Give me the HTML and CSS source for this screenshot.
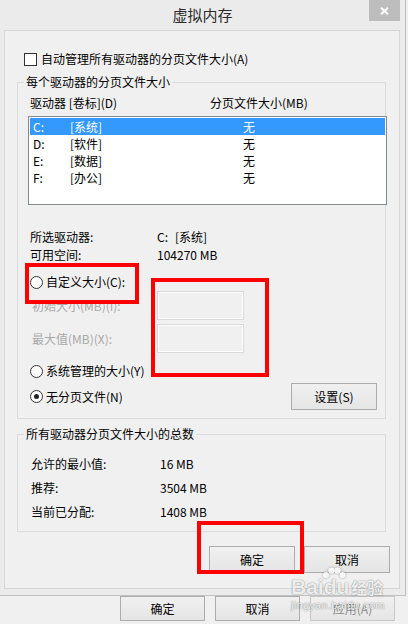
FILE: index.html
```html
<!DOCTYPE html>
<html lang="zh-CN">
<head>
<meta charset="utf-8">
<title>虚拟内存</title>
<link rel="stylesheet" href="styles.css">
</head>
<body>
<div class="dialog">
  <div class="titlebar">
    <span class="title">虚拟内存</span>
    <span class="close"><svg width="9" height="8" viewBox="0 0 9 8"><path d="M1 0.8 L8 7.2 M8 0.8 L1 7.2" stroke="#fff" stroke-width="2" fill="none"/></svg></span>
  </div>
  <div class="client">
    <div class="check-row"><span class="checkbox"></span><span>自动管理所有驱动器的分页文件大小(A)</span></div>

    <fieldset class="group group-drives">
      <legend>每个驱动器的分页文件大小</legend>
      <div class="list-head"><span>驱动器 [卷标](D)</span><span>分页文件大小(MB)</span></div>
      <div class="listbox">
        <div class="list-row selected"><span>C:</span><span>[系统]</span><span>无</span></div>
        <div class="list-row"><span>D:</span><span>[软件]</span><span>无</span></div>
        <div class="list-row"><span>E:</span><span>[数据]</span><span>无</span></div>
        <div class="list-row"><span>F:</span><span>[办公]</span><span>无</span></div>
      </div>
      <div class="info">
        <span>所选驱动器:</span><span><span class="drive">C:</span>[系统]</span>
        <span>可用空间:</span><span>104270 MB</span>
      </div>
      <div class="radio-row"><span class="radio"></span><span>自定义大小(C):</span></div>
      <div class="size-grid">
        <span class="disabled">初始大小(MB)(I):</span><span class="textbox"></span>
        <span class="disabled">最大值(MB)(X):</span><span class="textbox"></span>
      </div>
      <div class="radio-row sys"><span class="radio"></span><span>系统管理的大小(Y)</span></div>
      <div class="radio-row last"><span class="radio checked"></span><span>无分页文件(N)</span><button class="btn btn-set">设置(S)</button></div>
    </fieldset>

    <fieldset class="group group-total">
      <legend>所有驱动器分页文件大小的总数</legend>
      <div class="totals">
        <span>允许的最小值:</span><span>16 MB</span>
        <span>推荐:</span><span>3504 MB</span>
        <span>当前已分配:</span><span>1408 MB</span>
      </div>
    </fieldset>

    <div class="actions"><button class="btn">确定</button><button class="btn">取消</button></div>

    <div class="mark mark-custom"></div>
    <div class="mark mark-boxes"></div>
    <div class="mark mark-ok"></div>
  </div>
</div>
<div class="parent-actions">
  <button class="btn pbtn">确定</button>
  <button class="btn pbtn">取消</button>
  <button class="btn pbtn disabled-btn">应用(A)</button>
</div>
<div class="watermark">
  <div class="wm-logo"><span class="wm-bai">Bai</span><span class="wm-du"><svg class="paw" width="24" height="13" viewBox="0 0 24 13"><circle cx="4" cy="8" r="3"/><circle cx="9.5" cy="3.6" r="3.2"/><circle cx="15.5" cy="3.6" r="3.2"/><circle cx="20.5" cy="8" r="3"/></svg>du</span><span class="wm-cn">经验</span></div>
  <div class="wm-url">jingyan.baidu.com</div>
</div>
</body>
</html>
```
FILE: styles.css
```css
* { box-sizing: border-box; }
body {
  margin: 0;
  width: 408px;
  height: 624px;
  overflow: hidden;
  position: relative;
  background: #f0f0f0;
  font-family: "Noto Sans CJK SC", sans-serif;
  font-size: 12px;
  color: #000;
}
.dialog {
  width: 406px;
  height: 596px;
  background: #ebebeb;
  border-right: 1px solid #bdbdbd;
  border-bottom: 1px solid #c2c2c2;
  padding-bottom: 6px;
}
.titlebar {
  height: 30px;
  display: grid;
}
.title, .close { grid-area: 1 / 1; }
.title {
  justify-self: center;
  line-height: 30px;
  font-size: 15px;
  color: #2b2b2b;
}
.close {
  justify-self: end;
  align-self: start;
  width: 31px;
  height: 21px;
  margin-right: 5px;
  background: #bdbdbd;
  display: flex;
  align-items: center;
  justify-content: center;
}
.client {
  position: relative;
  margin-left: 4px;
  width: 396px;
  height: 559px;
  background: #f0f0f0;
  border: 1px solid #d6d6d6;
  padding-top: 20px;
}
.check-row {
  display: flex;
  align-items: center;
  height: 16px;
  line-height: 16px;
  padding-left: 19px;
  gap: 4px;
}
.checkbox {
  width: 13px;
  height: 13px;
  border: 1px solid #333;
  background: #fff;
}
.group {
  margin: 0 13px 0 12px;
  padding: 0;
  width: 369px;
  min-width: 0;
  border: 1px solid #dcdcdc;
}
.group legend {
  margin-left: 6px;
  padding: 0 2px;
  line-height: 16px;
  font-size: 12px;
}
.group-drives { margin-top: 7px; padding-bottom: 8px; }
.group-total { margin-top: 7px; padding-bottom: 7px; }
.list-head {
  margin-top: 5px;
  padding-left: 12px;
  display: grid;
  grid-template-columns: 180px auto;
  line-height: 16px;
}
.listbox {
  margin-top: 5px;
  margin-left: 10px;
  width: 359px;
  height: 89px;
  border: 1px solid #828790;
  background: #fff;
  padding: 1px;
}
.list-row {
  display: grid;
  grid-template-columns: 37px 173px auto;
  height: 17px;
  line-height: 17px;
  padding-left: 3px;
}
.list-row.selected { background: #3399ff; color: #fff; }
.info {
  margin-top: 23px;
  padding-left: 12px;
  display: grid;
  grid-template-columns: 127px auto;
  line-height: 18px;
}
.drive { margin-right: 7px; }
.radio-row {
  display: flex;
  align-items: center;
  height: 18px;
  line-height: 18px;
  padding-left: 12px;
  gap: 3px;
  margin-top: 9px;
}
.radio-row.last {
  height: 27px;
  margin-top: 3px;
  padding-right: 8px;
}
.radio {
  width: 13px;
  height: 13px;
  border: 1px solid #333;
  border-radius: 50%;
  background: #fff;
  display: flex;
  align-items: center;
  justify-content: center;
}
.radio.checked::after {
  content: "";
  width: 5px;
  height: 5px;
  border-radius: 50%;
  background: #222;
}
.size-grid {
  display: grid;
  grid-template-columns: 125px 87px;
  grid-auto-rows: 29px;
  row-gap: 4px;
  align-items: center;
  padding-left: 14px;
}
.disabled { color: #a8a8a8; line-height: 16px; }
.textbox {
  height: 29px;
  border: 1px solid #d9d9d9;
  box-shadow: inset 0 0 0 1px #fff;
  background: #f0f0f0;
}
.btn {
  font-family: inherit;
  font-size: 12px;
  color: #000;
  height: 27px;
  width: 86px;
  padding: 0;
  border: 1px solid #acacac;
  background: linear-gradient(#f0f0f0, #e5e5e5);
  line-height: 25px;
}
.btn-set { margin-left: auto; }
.totals {
  margin-top: 10px;
  padding-left: 13px;
  display: grid;
  grid-template-columns: 129px auto;
  grid-auto-rows: 24px;
  line-height: 24px;
}
.actions {
  margin-top: 14px;
  padding-right: 9px;
  display: flex;
  justify-content: flex-end;
  gap: 9px;
}
.mark {
  position: absolute;
  border: 4px solid #ff0000;
}
.mark-custom { left: 20px; top: 232px; width: 114px; height: 41px; }
.mark-boxes { left: 146px; top: 247px; width: 118px; height: 99px; }
.mark-ok { left: 192px; top: 490px; width: 107px; height: 53px; }
.parent-actions {
  display: flex;
  gap: 10px;
  padding-left: 120px;
}
.pbtn { width: 85px; height: 25px; line-height: 23px; }
.disabled-btn { color: #8c8c8c; border-color: #c8c8c8; }
.watermark {
  position: absolute;
  left: 291px;
  top: 570px;
  color: rgba(255, 255, 255, 0.9);
  text-shadow: 0 0 1px rgba(0, 0, 0, 0.45), 0 0 2px rgba(0, 0, 0, 0.2);
  pointer-events: none;
}
.wm-logo {
  display: flex;
  align-items: flex-end;
  font-family: "Liberation Sans", sans-serif;
  font-weight: bold;
  font-size: 21px;
  line-height: 24px;
  height: 29px;
}
.wm-du { position: relative; }
.paw {
  position: absolute;
  left: -2px;
  top: -8px;
  fill: rgba(255, 255, 255, 0.9);
  filter: drop-shadow(0 0 1px rgba(0, 0, 0, 0.4));
}
.wm-cn { font-family: "Noto Sans CJK SC", sans-serif; font-size: 16px; margin-left: 2px; }
.wm-url {
  font-family: "Liberation Sans", sans-serif;
  font-size: 11px;
  line-height: 12px;
  letter-spacing: 0.3px;
}
```
